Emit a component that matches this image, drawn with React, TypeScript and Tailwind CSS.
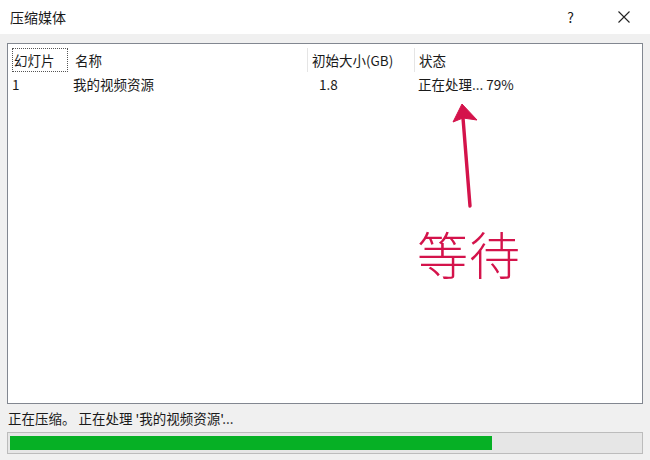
import React from "react";

const FONT = { fontFamily: '"Noto Sans CJK SC", "Noto Sans", sans-serif' };

const columns = [
  { label: "幻灯片", width: "w-[56px]" },
  { label: "名称", width: "w-[239px]" },
  { label: "初始大小(GB)", width: "w-[107px]" },
  { label: "状态", width: "flex-1" },
];

export default function App() {
  return (
    <div
      className="relative flex h-[460px] w-[650px] flex-col overflow-hidden bg-[#f0f0f0] text-[13.5px] text-[#1a1a1a]"
      style={FONT}
    >
      {/* title bar */}
      <div className="flex h-[34px] shrink-0 items-center bg-white pl-[10px]">
        <span className="flex-1 text-[14px] leading-none">压缩媒体</span>
        <span className="mr-[44px] text-[14px] leading-none">?</span>
        <svg width="12" height="12" viewBox="0 0 12 12" className="mr-[20px]">
          <path d="M0.5 0.5 L11.5 11.5 M11.5 0.5 L0.5 11.5" stroke="#222" strokeWidth="1.1" />
        </svg>
      </div>

      <div className="flex flex-1 flex-col px-[7px] pt-[9px]">
        {/* list view */}
        <div className="relative h-[361px] border border-[#828790] bg-white">
          <div className="flex h-[28px] items-center pt-[4px]">
            {columns.map((c, i) => (
              <div
                key={c.label}
                className={`flex h-full items-center ${c.width} ${
                  i === 0
                    ? "ml-[4px] border border-dotted border-[#555] pl-[1px]"
                    : i === 1
                      ? "pl-[7px]"
                      : "border-l border-[#e5e5e5] pl-[4px]"
                }`}
              >
                {c.label}
              </div>
            ))}
          </div>
          <div className="flex h-[25px] items-center">
            <div className="w-[64px] pl-[4px]">1</div>
            <div className="w-[239px] pl-[1px]">我的视频资源</div>
            <div className="w-[107px] pl-[8px]">1.8</div>
            <div className="flex-1">正在处理... 79%</div>
          </div>

          {/* annotation */}
          <svg
            className="absolute left-[432px] top-[50px]"
            width="50"
            height="116"
            viewBox="0 0 50 116"
          >
            <path d="M22 10 L13 28 L23 24 L37 26 Z" fill="#d4134b" stroke="#d4134b" strokeWidth="1" strokeLinejoin="round" />
            <path d="M23 24 L30 112" stroke="#d4134b" strokeWidth="3.4" strokeLinecap="round" />
          </svg>
          <div
            className="absolute left-[409px] top-[184px] text-[51px] leading-none tracking-[1px] text-[#d4134b]"
            style={{ fontFamily: '"Noto Sans CJK SC", sans-serif', fontWeight: 300 }}
          >
            等待
          </div>
        </div>

        <div className="mt-[4px] flex h-[20px] items-center pl-[1px]">
          正在压缩。 正在处理 '我的视频资源'...
        </div>

        <div className="mt-[4px] flex h-[22px] items-center border border-[#bcbcbc] bg-[#e6e6e6] px-[2px]">
          <div className="h-[14px] w-[482px] bg-[#06b025]" />
        </div>
      </div>
    </div>
  );
}
